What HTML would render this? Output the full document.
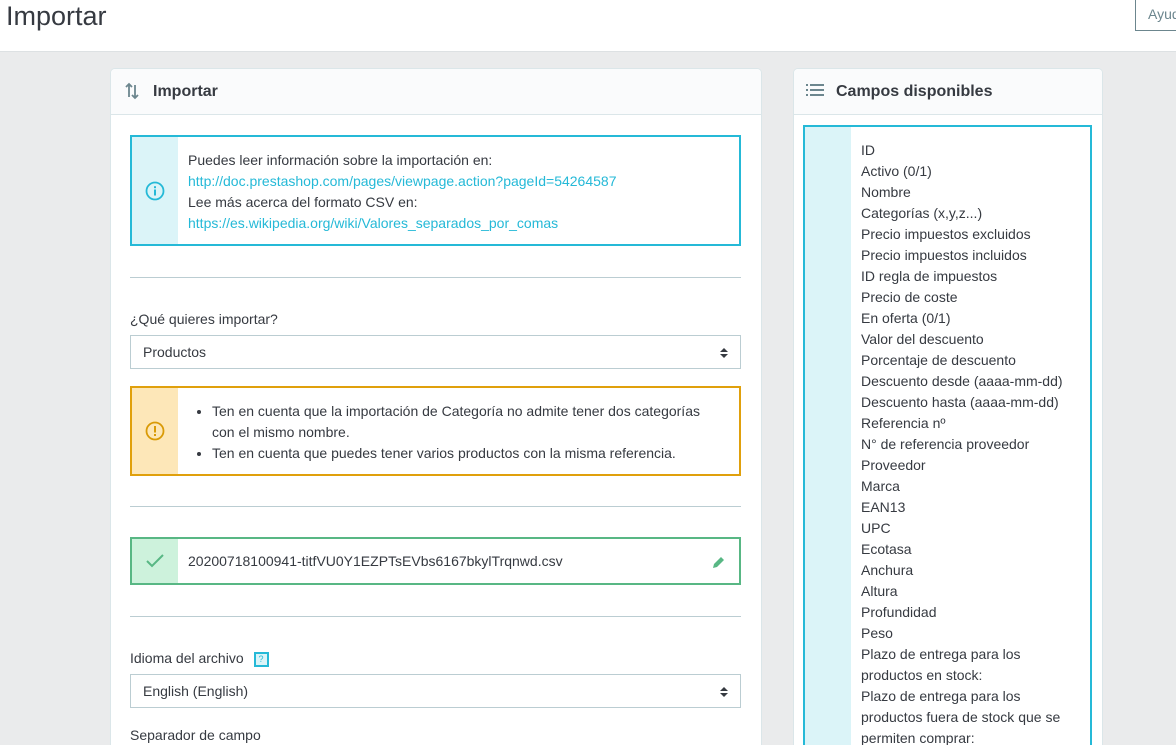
<!DOCTYPE html>
<html style="overflow:hidden"><head><meta charset="utf-8"><style>
*{box-sizing:border-box;margin:0;padding:0}
html,body{width:1176px;height:745px;overflow:hidden}
body{background:#eaebec;font-family:"Liberation Sans",sans-serif;color:#363a41;font-size:14px;position:relative}
.top{position:absolute;left:0;top:0;width:1176px;height:52px;background:#fff;border-bottom:1px solid #dde1e3}
.top h1{position:absolute;left:6px;top:1px;font-size:27px;font-weight:normal;color:#363a41}
.btn{position:absolute;left:1135px;top:-2px;width:60px;height:33px;border:1px solid #6c868e;color:#6c868e;padding:7px 0 0 12px;font-size:14px;background:#fff}
.card{position:absolute;background:#fff;border:1px solid #dbe6e9;border-radius:5px;overflow:hidden}
.ch{height:46px;background:#fafbfc;border-bottom:1px solid #dbe6e9;font-weight:bold;font-size:16px;padding:14px 0 0 42px;position:relative}
.a{position:absolute}
.line{position:absolute;left:19px;width:611px;height:1px;background:#bbcdd2}
.sel{position:absolute;left:19px;width:611px;height:34px;border:1px solid #bbcdd2;padding:8px 0 0 12px}
.sel:after{content:"";position:absolute;right:12px;top:12px;border:4px solid transparent;border-bottom:4px solid #363a41;border-top:0}
.sel:before{content:"";position:absolute;right:12px;top:18px;border:4px solid transparent;border-top:4px solid #363a41;border-bottom:0}
a{color:#25b9d7;text-decoration:none}
.lh{line-height:21px}
</style></head><body>
<div class="top"><h1>Importar</h1><div class="btn">Ayuda</div></div>

<div class="card" style="left:110px;top:68px;width:652px;height:700px">
 <div class="ch">
  <svg class="a" style="left:13px;top:13px" width="16" height="18" viewBox="0 0 16 18" fill="none" stroke="#6c868e" stroke-width="1.8"><path d="M5 15V2M2 5l3-3 3 3"/><path d="M11 3v13M8 13l3 3 3-3"/></svg>
  Importar</div>
 <div class="a" style="left:19px;top:66px;width:611px;height:111px;border:2px solid #25b9d7">
  <div class="a" style="left:0;top:0;width:46px;height:107px;background:#dbf4f8"></div>
  <svg class="a" style="left:13px;top:44px" width="20" height="20" viewBox="0 0 20 20"><circle cx="10" cy="10" r="8.5" fill="none" stroke="#25b9d7" stroke-width="1.8"/><rect x="9" y="8.5" width="2" height="6" fill="#25b9d7"/><rect x="9" y="5.2" width="2" height="2" fill="#25b9d7"/></svg>
  <div class="a lh" style="left:56px;top:13px;white-space:nowrap">Puedes leer información sobre la importación en:<br><a>http://doc.prestashop.com/pages/viewpage.action?pageId=54264587</a><br>Lee más acerca del formato CSV en:<br><a>https://es.wikipedia.org/wiki/Valores_separados_por_comas</a></div>
 </div>
 <div class="line" style="top:208px"></div>
 <div class="a" style="left:19px;top:242px">¿Qué quieres importar?</div>
 <div class="sel" style="top:266px">Productos</div>
 <div class="a" style="left:19px;top:317px;width:611px;height:90px;border:2px solid #e0a00c">
  <div class="a" style="left:0;top:0;width:46px;height:86px;background:#fde7b8"></div>
  <svg class="a" style="left:13px;top:33px" width="20" height="20" viewBox="0 0 20 20"><circle cx="10" cy="10" r="8.5" fill="none" stroke="#d99a06" stroke-width="1.8"/><rect x="9" y="5" width="2" height="6.5" fill="#d99a06"/><rect x="9" y="13" width="2" height="2" fill="#d99a06"/></svg>
  <ul class="a lh" style="left:80px;top:13px;width:500px">
   <li>Ten en cuenta que la importación de Categoría no admite tener dos categorías con el mismo nombre.</li>
   <li>Ten en cuenta que puedes tener varios productos con la misma referencia.</li>
  </ul>
 </div>
 <div class="line" style="top:437px"></div>
 <div class="a" style="left:19px;top:468px;width:611px;height:48px;border:2px solid #58b784">
  <div class="a" style="left:0;top:0;width:46px;height:44px;background:#cdf2dc"></div>
  <svg class="a" style="left:13px;top:14px" width="20" height="16" viewBox="0 0 20 16"><path d="M2 8l5 5L18 2" fill="none" stroke="#58b784" stroke-width="2"/></svg>
  <div class="a" style="left:56px;top:14px">20200718100941-titfVU0Y1EZPTsEVbs6167bkylTrqnwd.csv</div>
  <svg class="a" style="left:580px;top:16px" width="14" height="14" viewBox="0 0 14 14"><path d="M1 13l1-4 7-7 3 3-7 7z" fill="#58b784"/></svg>
 </div>
 <div class="line" style="top:547px"></div>
 <div class="a" style="left:19px;top:581px">Idioma del archivo <span style="display:inline-block;width:15px;height:15px;border:2px solid #25b9d7;background:#dbf4f8;color:#25b9d7;font-size:9px;text-align:center;line-height:11px;margin-left:6px;vertical-align:1px">?</span></div>
 <div class="sel" style="top:605px">English (English)</div>
 <div class="a" style="left:19px;top:658px">Separador de campo</div>
</div>

<div class="card" style="left:793px;top:68px;width:310px;height:700px">
 <div class="ch" style="padding-left:42px">
  <svg class="a" style="left:12px;top:15px" width="18" height="13" viewBox="0 0 18 13" fill="#6c868e"><rect x="0" y="0" width="2" height="2"/><rect x="4" y="0" width="14" height="2"/><rect x="0" y="5" width="2" height="2"/><rect x="4" y="5" width="14" height="2"/><rect x="0" y="10" width="2" height="2"/><rect x="4" y="10" width="14" height="2"/></svg>
  Campos disponibles</div>
 <div class="a" style="left:9px;top:56px;width:289px;height:700px;border:2px solid #25b9d7">
  <div class="a" style="left:0;top:0;width:46px;height:700px;background:#dbf4f8"></div>
  <div class="a lh" style="left:56px;top:13px;width:220px">ID<br>Activo (0/1)<br>Nombre<br>Categorías (x,y,z...)<br>Precio impuestos excluidos<br>Precio impuestos incluidos<br>ID regla de impuestos<br>Precio de coste<br>En oferta (0/1)<br>Valor del descuento<br>Porcentaje de descuento<br>Descuento desde (aaaa-mm-dd)<br>Descuento hasta (aaaa-mm-dd)<br>Referencia nº<br>N° de referencia proveedor<br>Proveedor<br>Marca<br>EAN13<br>UPC<br>Ecotasa<br>Anchura<br>Altura<br>Profundidad<br>Peso<br>Plazo de entrega para los productos en stock:<br>Plazo de entrega para los productos fuera de stock que se permiten comprar:</div>
 </div>
</div>
</body></html>
